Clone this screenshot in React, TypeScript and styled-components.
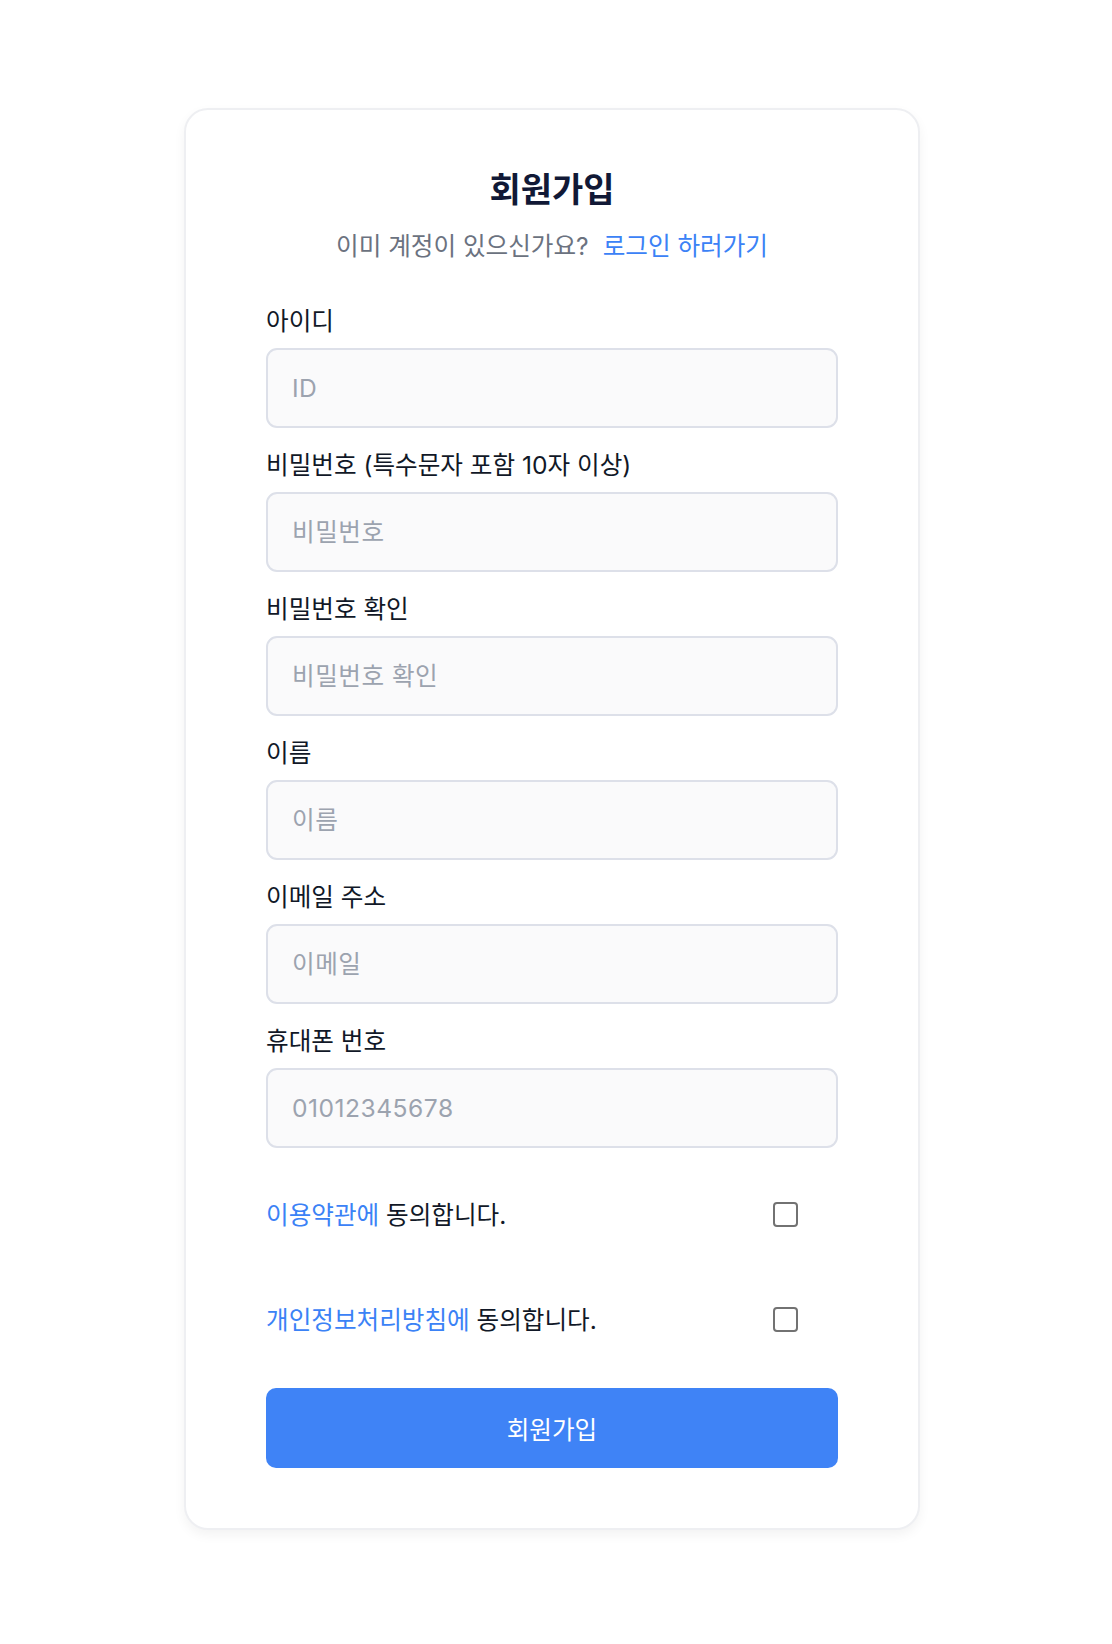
import React, {useState} from "react";
import styled, {createGlobalStyle} from "styled-components";

const GlobalStyle = createGlobalStyle`
  body {
    margin: 0;
    background: #ffffff;
    font-family: Inter, "Noto Sans CJK KR", sans-serif;
  }

  * {
    box-sizing: border-box;
  }
`

const fields = [
    {label: "아이디", name: "id", placeholder: "ID", type: "text"},
    {label: "비밀번호 (특수문자 포함 10자 이상)", name: "password", placeholder: "비밀번호", type: "password"},
    {label: "비밀번호 확인", name: "passwordCheck", placeholder: "비밀번호 확인", type: "password"},
    {label: "이름", name: "name", placeholder: "이름", type: "text"},
    {label: "이메일 주소", name: "email", placeholder: "이메일", type: "email"},
    {label: "휴대폰 번호", name: "phone", placeholder: "01012345678", type: "tel"},
];

export default function App() {
    const [terms, setTerms] = useState(false);
    const [privacy, setPrivacy] = useState(false);

    return (
        <>
            <GlobalStyle/>
            <Page>
                <Card>
                    <Title>회원가입</Title>
                    <SubText>
                        이미 계정이 있으신가요?<LinkText href="#">로그인 하러가기</LinkText>
                    </SubText>
                    <Form onSubmit={e => e.preventDefault()}>
                        {fields.map(field => (
                            <Field key={field.name}>
                                <Label htmlFor={field.name}>{field.label}</Label>
                                <Input id={field.name} name={field.name} type={field.type}
                                       placeholder={field.placeholder}/>
                            </Field>
                        ))}
                        <Agreements>
                            <AgreeRow>
                                <AgreeText><Blue>이용약관에</Blue> 동의합니다.</AgreeText>
                                <CheckBox type="checkbox" checked={terms} onChange={() => setTerms(!terms)}/>
                            </AgreeRow>
                            <AgreeRow>
                                <AgreeText><Blue>개인정보처리방침에</Blue> 동의합니다.</AgreeText>
                                <CheckBox type="checkbox" checked={privacy} onChange={() => setPrivacy(!privacy)}/>
                            </AgreeRow>
                        </Agreements>
                        <SubmitButton type="submit">회원가입</SubmitButton>
                    </Form>
                </Card>
            </Page>
        </>
    );
}

const Page = styled.div`
  display: flex;
  justify-content: center;
  padding: 108px 8px 114px 0;
`

const Card = styled.div`
  width: 736px;
  padding: 60px 80px;
  border: 2px solid #eeeff2;
  border-radius: 24px;
  background: #ffffff;
  box-shadow: 0 5px 12px rgba(0, 0, 0, 0.05);
  display: flex;
  flex-direction: column;
  align-items: center;
`

const Title = styled.h1`
  margin: 0;
  font-size: 34px;
  line-height: 40px;
  font-weight: 700;
  color: #111936;
`

const SubText = styled.p`
  margin: 21px 0 0;
  font-size: 24.6px;
  line-height: 30px;
  color: #6b7280;
`

const LinkText = styled.a`
  margin-left: 14px;
  color: #3b82f6;
  text-decoration: none;
`

const Form = styled.form`
  width: 100%;
  margin-top: 45px;
  display: flex;
  flex-direction: column;
`

const Field = styled.div`
  display: flex;
  flex-direction: column;
  gap: 12px;
  margin-bottom: 22px;

  &:nth-child(6) {
    margin-bottom: 0;
  }
`

const Label = styled.label`
  font-size: 24.6px;
  line-height: 30px;
  font-weight: 400;
  color: #111827;
`

const Input = styled.input`
  height: 80px;
  padding: 0 24px;
  border: 2px solid #dde0e9;
  border-radius: 11px;
  background: #fafafb;
  font-family: inherit;
  font-size: 24.6px;
  letter-spacing: 0.5px;
  color: #111827;
  outline: none;

  &::placeholder {
    color: #9ca3af;
  }
`

const Agreements = styled.div`
  margin: 14px 0 16px;
  display: flex;
  flex-direction: column;
`

const AgreeRow = styled.label`
  height: 105px;
  padding-right: 40px;
  display: flex;
  align-items: center;
  justify-content: space-between;
`

const AgreeText = styled.span`
  font-size: 24.6px;
  line-height: 30px;
  color: #111827;
`

const Blue = styled.span`
  color: #3b82f6;
`

const CheckBox = styled.input`
  appearance: none;
  margin: 0;
  width: 25px;
  height: 25px;
  border: 2px solid #727272;
  border-radius: 4px;
  background: #ffffff;
  cursor: pointer;

  &:checked {
    background: #3b82f6;
    border-color: #3b82f6;
  }
`

const SubmitButton = styled.button`
  height: 80px;
  border: none;
  border-radius: 10px;
  background: #3f83f6;
  color: #ffffff;
  font-family: inherit;
  font-size: 24.6px;
  font-weight: 400;
  cursor: pointer;
`
